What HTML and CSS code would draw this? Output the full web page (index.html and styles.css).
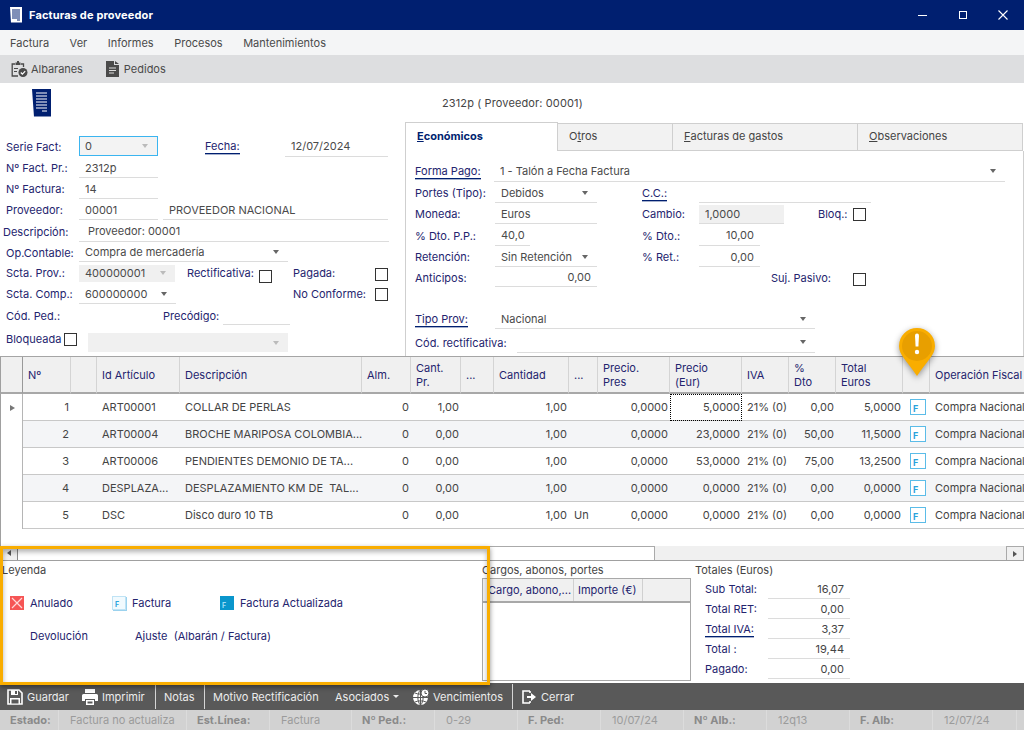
FILE: index.html
```html
<!DOCTYPE html>
<html lang="es">
<head>
<meta charset="utf-8">
<title>Facturas de proveedor</title>
<link rel="stylesheet" href="styles.css">
</head>
<body>
<div class="app">
  <header class="titlebar">
    <svg class="title-icon" viewBox="0 0 12 16" width="12" height="16"><path fill="#fff" d="M0 0h12v15l-1 1-1-1-1 1-1-1-1 1-1-1-1 1-1-1-1 1-1-1-1 1z"/><path stroke="#001f70" d="M2 3h8M2 5h8M2 7h8M2 9h8M2 11h8M7 13h3"/></svg>
    <span class="title-text">Facturas de proveedor</span>
    <div class="winctrls">
      <svg viewBox="0 0 10 10" width="10" height="10"><path stroke="#fff" d="M0 5.5h9"/></svg>
      <svg viewBox="0 0 10 10" width="10" height="10"><rect x="1.5" y="1.5" width="7" height="7" fill="none" stroke="#fff"/></svg>
      <svg viewBox="0 0 10 10" width="10" height="10"><path stroke="#fff" stroke-width="1.1" d="M.5.5l9 9M9.5.5l-9 9"/></svg>
    </div>
  </header>
  <nav class="menubar">
    <span>Factura</span><span>Ver</span><span>Informes</span><span>Procesos</span><span>Mantenimientos</span>
  </nav>
  <div class="toolbar">
    <span class="tool tool-alb">
      <svg viewBox="0 0 17 16" width="17" height="16"><path fill="none" stroke="#4a4a4a" stroke-width="1.3" d="M4 3H1.2v12H7M10 3h2.5v3"/><path fill="#4a4a4a" d="M4.5 1.5h1.5V0h2v1.500h1.500V4h-5zM3 7h4v1H3zM3 10h3v1H3z"/><circle cx="12" cy="11.500" r="4.500" fill="#4a4a4a"/><path fill="none" stroke="#fff" stroke-width="1.200" d="M9.800 11.500l1.600 1.600 2.800-3"/></svg>
      Albaranes
    </span>
    <span class="tool">
      <svg viewBox="0 0 13 16" width="13" height="16"><path fill="#4a4a4a" d="M0 0h8v4h5v12H0z"/><path fill="#4a4a4a" d="M9 0l4 3H9z"/><path stroke="#ddd" d="M3 7h7M3 9.500h7M3 12h5"/></svg>
      Pedidos
    </span>
  </div>

  <div class="doc-head">
    <svg class="doc-icon" viewBox="0 0 19 28" width="19" height="28"><path fill="#001f70" d="M0 0h19v27l-1 1-1-1-1 1-1-1-1 1-1-1-1 1-1-1-1 1-1-1-1 1-1-1-1 1-1-1-1 1-1-1-1 1z"/><path stroke="#fff" d="M4 4h11M4 7h11M4 10h11M4 13h11M4 16h11M4 19h11M10 22h5"/></svg>
    <span class="doc-title">2312p ( Proveedor: 00001)</span>
  </div>

  <section class="upper">
    <div class="left-form">
      <div class="frow frow-top">
        <label class="lbl w73">Serie Fact:</label>
        <span class="val sel focus w79">0<i class="arrow light"></i></span>
        <label class="lbl w80 ml47"><span class="link">Fecha:</span></label>
        <span class="val line w103">12/07/2024</span>
      </div>
      <div class="frow">
        <label class="lbl w73">Nº Fact. Pr.:</label>
        <span class="val line w79">2312p</span>
      </div>
      <div class="frow">
        <label class="lbl w73">Nº Factura:</label>
        <span class="val line w79">14</span>
      </div>
      <div class="frow">
        <label class="lbl w73">Proveedor:</label>
        <span class="val line w79">00001</span>
        <span class="val line w225 ml5">PROVEEDOR NACIONAL</span>
      </div>
      <div class="frow">
        <label class="lbl w76 nudge-left">Descripción:</label>
        <span class="val line w310 pad9">Proveedor: 00001</span>
      </div>
      <div class="frow">
        <label class="lbl w73">Op.Contable:</label>
        <span class="val sel line w209">Compra de mercadería<i class="arrow"></i></span>
      </div>
      <div class="frow">
        <label class="lbl w73">Scta. Prov.:</label>
        <span class="val sel off w96">400000001<i class="arrow light"></i></span>
        <label class="lbl w72 ml12">Rectificativa:</label>
        <i class="check chk-low"></i>
        <label class="lbl w82 ml21">Pagada:</label>
        <i class="check chk-pag"></i>
      </div>
      <div class="frow">
        <label class="lbl w73">Scta. Comp.:</label>
        <span class="val sel line w97">600000000<i class="arrow"></i></span>
        <label class="lbl w82 ml117">No Conforme:</label>
        <i class="check"></i>
      </div>
      <div class="frow frow-ped">
        <label class="lbl w157">Cód. Ped.:</label>
        <label class="lbl w60">Precódigo:</label>
        <span class="val line w67"></span>
      </div>
      <div class="frow frow-end">
        <label class="lbl w58 lbl-block">Bloqueada</label>
        <i class="check chk-block"></i>
        <span class="val sel off w200 ml11"><i class="arrow light"></i></span>
      </div>
    </div>

    <div class="tabs">
      <div class="tabbar">
        <span class="tab active"><u>E</u>conómicos</span>
        <span class="tab t115">O<u>t</u>ros</span>
        <span class="tab t185"><u>F</u>acturas de gastos</span>
        <span class="tab t165"><u>O</u>bservaciones</span>
      </div>
      <div class="tabpanel">
        <div class="frow">
          <label class="lbl w80"><span class="link">Forma Pago:</span></label>
          <span class="val sel line w511 nudge1">1 - Talón a Fecha Factura<i class="arrow"></i></span>
        </div>
        <div class="frow">
          <label class="lbl w80">Portes (Tipo):</label>
          <span class="val sel line w102">Debidos<i class="arrow"></i></span>
          <label class="lbl w57 ml45"><span class="link">C.C.:</span></label>
          <span class="val line w172"></span>
        </div>
        <div class="frow">
          <label class="lbl w80">Moneda:</label>
          <span class="val line w102">Euros</span>
          <label class="lbl w57 ml45">Cambio:</label>
          <span class="val line off w85">1,0000</span>
          <label class="lbl w35 ml34">Bloq.:</label>
          <i class="check"></i>
        </div>
        <div class="frow">
          <label class="lbl w80">% Dto. P.P.:</label>
          <span class="val line w35">40,0</span>
          <label class="lbl w57 ml112">% Dto.:</label>
          <span class="val line w61 right">10,00</span>
        </div>
        <div class="frow">
          <label class="lbl w80">Retención:</label>
          <span class="val sel line w102">Sin Retención<i class="arrow"></i></span>
          <label class="lbl w57 ml45">% Ret.:</label>
          <span class="val line w61 right">0,00</span>
        </div>
        <div class="frow">
          <label class="lbl w80">Anticipos:</label>
          <span class="val line w102 right">0,00</span>
          <label class="lbl w82 ml174">Suj. Pasivo:</label>
          <i class="check chk-suj"></i>
        </div>
        <div class="frow"></div>
        <div class="frow">
          <label class="lbl w80"><span class="link">Tipo Prov:</span></label>
          <span class="val sel line w320">Nacional<i class="arrow"></i></span>
        </div>
        <div class="frow frow-rect">
          <label class="lbl w102">Cód. rectificativa:</label>
          <span class="val sel line w298"><i class="arrow"></i></span>
        </div>
      </div>
    </div>
  </section>

  <section class="grid">
    <table class="lines">
      <colgroup>
        <col class="c23"><col class="c48"><col class="c26"><col class="c83"><col class="c182"><col class="c49"><col class="c50"><col class="c33"><col class="c75"><col class="c29"><col class="c72"><col class="c72"><col class="c47"><col class="c47"><col class="c67"><col class="c27"><col class="c110">
      </colgroup>
      <thead>
        <tr>
          <th class="rowhead"></th><th>Nº</th><th></th><th>Id Artículo</th><th>Descripción</th><th>Alm.</th><th>Cant.<br>Pr.</th><th>...</th><th>Cantidad</th><th>...</th><th>Precio.<br>Pres</th><th>Precio<br>(Eur)</th><th>IVA</th><th>%<br>Dto</th><th>Total<br>Euros</th><th></th><th>Operación Fiscal</th>
        </tr>
      </thead>
      <tbody>
        <tr>
          <td class="rowhead"><i class="row-mark"></i></td><td class="num first">1</td><td></td><td>ART00001</td><td>COLLAR DE PERLAS</td><td class="num">0</td><td class="num">1,00</td><td></td><td class="num">1,00</td><td></td><td class="num">0,0000</td><td class="num current">5,0000</td><td>21% (0)</td><td class="num">0,00</td><td class="num">5,0000</td><td class="iconcell"><span class="fdoc">F</span></td><td>Compra Nacional</td>
        </tr>
        <tr>
          <td class="rowhead"></td><td class="num first">2</td><td></td><td>ART00004</td><td>BROCHE MARIPOSA COLOMBIA...</td><td class="num">0</td><td class="num">0,00</td><td></td><td class="num">1,00</td><td></td><td class="num">0,0000</td><td class="num">23,0000</td><td>21% (0)</td><td class="num">50,00</td><td class="num">11,5000</td><td class="iconcell"><span class="fdoc">F</span></td><td>Compra Nacional</td>
        </tr>
        <tr>
          <td class="rowhead"></td><td class="num first">3</td><td></td><td>ART00006</td><td>PENDIENTES DEMONIO DE TA...</td><td class="num">0</td><td class="num">0,00</td><td></td><td class="num">1,00</td><td></td><td class="num">0,0000</td><td class="num">53,0000</td><td>21% (0)</td><td class="num">75,00</td><td class="num">13,2500</td><td class="iconcell"><span class="fdoc">F</span></td><td>Compra Nacional</td>
        </tr>
        <tr>
          <td class="rowhead"></td><td class="num first">4</td><td></td><td>DESPLAZA...</td><td>DESPLAZAMIENTO KM DE&nbsp; TAL...</td><td class="num">0</td><td class="num">0,00</td><td></td><td class="num">1,00</td><td></td><td class="num">0,0000</td><td class="num">0,0000</td><td>21% (0)</td><td class="num">0,00</td><td class="num">0,0000</td><td class="iconcell"><span class="fdoc">F</span></td><td>Compra Nacional</td>
        </tr>
        <tr>
          <td class="rowhead"></td><td class="num first">5</td><td></td><td>DSC</td><td>Disco duro 10 TB</td><td class="num">0</td><td class="num">0,00</td><td></td><td class="num">1,00</td><td>Un</td><td class="num">0,0000</td><td class="num">0,0000</td><td>21% (0)</td><td class="num">0,00</td><td class="num">0,0000</td><td class="iconcell"><span class="fdoc">F</span></td><td>Compra Nacional</td>
        </tr>
      </tbody>
    </table>
  </section>
  <div class="hscroll">
    <span class="sbtn"><i class="tri-left"></i></span>
    <span class="thumb"></span>
    <span class="sbtn sbtn-right"><i class="tri-right"></i></span>
  </div>

  <section class="lower">
    <div class="legend">
      <div class="caption">Leyenda</div>
      <div class="legend-row">
        <span class="item item-anulado">
          <svg viewBox="0 0 14 14" width="14" height="14"><rect width="14" height="14" fill="#f65555"/><path stroke="#ffd8d8" stroke-width="1.200" d="M2 2l10 10M12 2L2 12"/></svg>
          Anulado
        </span>
        <span class="item item-factura"><span class="fdoc soft">F</span>Factura</span>
        <span class="item"><span class="fdoc solid">F</span>Factura Actualizada</span>
      </div>
      <div class="legend-row row-two">
        <span class="plain w105">Devolución</span>
        <span class="plain">Ajuste&nbsp; (Albarán / Factura)</span>
      </div>
    </div>
    <div class="cargos">
      <div class="caption">Cargos, abonos, portes</div>
      <div class="cargos-box">
        <div class="cargos-head">
          <span class="ch1">Cargo, abono,...</span><span class="ch2">Importe (€)</span>
        </div>
      </div>
    </div>
    <div class="totals">
      <div class="caption caption-totals">Totales (Euros)</div>
      <div class="total-row"><span class="total-lbl">Sub Total:</span><span class="total-val">16,07</span></div>
      <div class="total-row"><span class="total-lbl">Total RET:</span><span class="total-val">0,00</span></div>
      <div class="total-row"><span class="total-lbl"><span class="link">Total IVA:</span></span><span class="total-val">3,37</span></div>
      <div class="total-row"><span class="total-lbl">Total :</span><span class="total-val">19,44</span></div>
      <div class="total-row"><span class="total-lbl">Pagado:</span><span class="total-val">0,00</span></div>
    </div>
  </section>

  <footer class="actionbar">
    <span class="act a-guardar">
      <svg viewBox="0 0 16 16" width="16" height="16"><path fill="none" stroke="#fff" stroke-width="1.600" d="M1 1h11l3 3v11H1z"/><path fill="#fff" d="M4 1h7v5H4zM3 9h10v6H3z"/><path fill="#595959" d="M8 2h2v3H8zM4.500 10.500h7v4h-7z"/></svg>
      Guardar
    </span>
    <span class="act a-imprimir sep-after">
      <svg viewBox="0 0 16 16" width="16" height="16"><path fill="#fff" d="M3 0h10v4H3zM1.500 5h13A1.500 1.500 0 0 1 16 6.500V12h-3v-2H3v2H0V6.500A1.500 1.500 0 0 1 1.500 5zM4 11h8v5H4z"/><path fill="#595959" d="M5.500 12.500h5v2h-5z"/></svg>
      Imprimir
    </span>
    <span class="act a-notas sep-after">Notas</span>
    <span class="act a-motivo">Motivo Rectificación</span>
    <span class="act a-asoc">Asociados<i class="caret"></i></span>
    <span class="act a-venc sep-after">
      <svg viewBox="0 0 16 16" width="16" height="16"><circle cx="7.500" cy="8.500" r="7.500" fill="#fff"/><path stroke="#595959" fill="none" d="M0 8.500h15M7.500 1v15M2 4c3 1.500 8 1.500 11 0M2 13c3-1.500 8-1.500 11 0M7.500 1C4 4 4 13 7.500 16M7.500 1c3.500 3 3.500 12 0 15"/><circle cx="12" cy="4" r="4" fill="#fff" stroke="#595959"/><path stroke="#595959" fill="none" d="M12 2v2.500h2"/></svg>
      Vencimientos
    </span>
    <span class="act a-cerrar">
      <svg viewBox="0 0 14 14" width="14" height="14"><path fill="none" stroke="#fff" stroke-width="1.600" d="M8 1H1v12h7M8 1v2M8 11v2"/><path fill="#fff" d="M5 6h4V3l5 4-5 4V8H5z"/></svg>
      Cerrar
    </span>
  </footer>

  <div class="statusbar">
    <span class="st key s59">Estado:</span>
    <span class="st s128">Factura no actualiza</span>
    <span class="st key s83">Est.Línea:</span>
    <span class="st s82">Factura</span>
    <span class="st key s83">Nº Ped.:</span>
    <span class="st s83">0-29</span>
    <span class="st key s83">F. Ped:</span>
    <span class="st s83">10/07/24</span>
    <span class="st key s83">Nº Alb.:</span>
    <span class="st s83">12q13</span>
    <span class="st key s83">F. Alb:</span>
    <span class="st s84">12/07/24</span>
  </div>

  <div class="highlight"></div>
  <svg class="pin" viewBox="0 0 36 48" width="36" height="48"><path fill="#f9ad00" d="M18 0a18 18 0 0 1 18 18c0 9-8 15-18 30C8 33 0 27 0 18A18 18 0 0 1 18 0z"/><circle cx="18" cy="18" r="15" fill="#e89f00"/><path fill="#fff" d="M16 7.500a2 2 0 0 1 4 0l-.6 11h-2.800z"/><circle cx="18" cy="24" r="2.200" fill="#fff"/></svg>
</div>
</body>
</html>
```
FILE: styles.css
```css
* { box-sizing: border-box; }
html, body { margin: 0; padding: 0; }
body { background: #fff; overflow: hidden; }
.app {
  position: relative;
  width: 1024px;
  height: 730px;
  overflow: hidden;
  display: flex;
  flex-direction: column;
  font: 11px/14px Inter, "Liberation Sans", sans-serif;
  color: #444;
}

/* title / menu / toolbar */
.titlebar { flex: 0 0 30px; background: #001f70; color: #fff; display: flex; align-items: center; padding-left: 10px; }
.title-icon { margin-right: 7px; }
.title-text { font-weight: 700; font-size: 11px; letter-spacing: .15px; }
.winctrls { margin-left: auto; display: flex; align-items: center; gap: 30px; padding-right: 16px; }
.menubar { flex: 0 0 25px; background: #f4f5f6; display: flex; align-items: center; gap: 20.5px; padding-left: 10px; color: #4a4a4a; }
.toolbar { flex: 0 0 28px; background: #dddee0; display: flex; align-items: center; padding-left: 11px; color: #4a4a4a; }
.tool { display: flex; align-items: center; gap: 3px; }
.tool-alb { margin-right: 23px; letter-spacing: -.05px; }
.tool + .tool { gap: 5px; }

/* document head */
.doc-head { flex: 0 0 39px; display: flex; align-items: flex-start; padding: 6px 0 0 32px; }
.doc-title { margin: 7px 0 0 391px; letter-spacing: .12px; }
.upper { flex: 0 0 234px; display: flex; }
.left-form {
  width: 405px;
  padding: 14px 0 0 6px;
  display: grid;
  grid-template-rows: 21px 21px 21px 21px 22px 20px 21px 21px 21px 28px;
  align-content: start;
}

/* form atoms */
.frow { display: flex; align-items: center; min-width: 0; padding-top: 1px; }
.frow-top { padding-top: 0; }
.frow-ped { padding-top: 2px; }
.frow-rect { padding-top: 3px; }
.frow-end { align-items: flex-end; padding-top: 0; padding-bottom: 1px; }
.lbl { color: #24246e; white-space: nowrap; flex: none; }
.link { border-bottom: 1px solid #001f70; display: inline-block; line-height: 13px; box-shadow: 0 1px 0 rgba(0,31,112,.35); }
.val { flex: none; height: 100%; display: flex; align-items: center; padding: 0 6px; color: #4a4a4a; white-space: nowrap; }
.line { border-bottom: 1px solid #dcdcdc; }
.right { justify-content: flex-end; }
.pad9 { padding-left: 9px; }
.sel { justify-content: space-between; }
.focus { border: 1px solid #3bb5f0; background: #f3f3f3; height: 20px; align-self: flex-start; padding-left: 5px; }
.off { background: #f0f0f0; }
.sel.off { height: 17px; align-self: center; }
.frow-end .sel.off { height: 19px; align-self: flex-end; }
.line.off { height: 19px; align-self: flex-end; }
.arrow { width: 0; height: 0; border: 3.5px solid transparent; border-top: 4px solid #666; border-bottom: 0; margin: 0 3px 0 auto; flex: none; }
.arrow.light { border-top-color: #bbb; }
.check { width: 13px; height: 13px; border: 1px solid #333; background: #fff; flex: none; }
.chk-low { align-self: flex-end; }
.chk-pag { margin-top: 2px; }
.chk-suj { align-self: flex-end; margin-bottom: 1px; }
.chk-block { margin-bottom: 6px; }
.lbl-block { margin-bottom: 6px; }
.nudge-left { margin-left: -3px; }
.nudge1 { margin-left: -1px; }
.w35 { width: 35px; } .w57 { width: 57px; } .w58 { width: 58px; } .w60 { width: 60px; } .w61 { width: 61px; } .w67 { width: 67px; }
.w72 { width: 72px; } .w73 { width: 73px; } .w76 { width: 76px; } .w79 { width: 79px; } .w80 { width: 80px; } .w82 { width: 82px; } .w85 { width: 85px; }
.w96 { width: 96px; } .w97 { width: 97px; } .w102 { width: 102px; } .w103 { width: 103px; } .w105 { width: 105px; } .w157 { width: 157px; } .w172 { width: 172px; }
.w200 { width: 200px; } .w209 { width: 209px; } .w225 { width: 225px; } .w298 { width: 298px; } .w310 { width: 310px; } .w320 { width: 320px; } .w511 { width: 511px; }
.ml5 { margin-left: 5px; } .ml11 { margin-left: 11px; } .ml12 { margin-left: 12px; } .ml21 { margin-left: 21px; } .ml34 { margin-left: 34px; } .ml45 { margin-left: 45px; }
.ml47 { margin-left: 47px; } .ml112 { margin-left: 112px; } .ml117 { margin-left: 117px; } .ml174 { margin-left: 174px; }

/* tabs */
.tabs { flex: 1; display: flex; flex-direction: column; min-width: 0; }
.tabbar { flex: 0 0 29px; display: flex; align-items: flex-end; padding-right: 1px; }
.tab { height: 28px; background: #f2f2f2; border: 1px solid #cfcfcf; border-left: 0; display: flex; align-items: center; padding: 0 0 2px 11px; color: #444; }
.tab.active { width: 153px; height: 29px; background: #fff; border-left: 1px solid #cfcfcf; border-bottom: 0; font-weight: 700; color: #001f70; }
.t115 { width: 115px; } .t185 { width: 185px; } .t165 { width: 165px; }
.tabpanel {
  flex: 1;
  border: 1px solid #cfcfcf;
  border-top: 0;
  border-bottom: 0;
  margin-right: 0;
  padding: 9px 0 0 9px;
  display: grid;
  grid-template-rows: 22px 21px 21px 22px 21px 20px 21px 21px 24px;
  align-content: start;
}

/* grid */
.grid { flex: 0 0 190px; border-top: 1px solid #a5a5a5; overflow: hidden; box-shadow: inset 1px 0 0 #a0a0a0; }
.lines { table-layout: fixed; width: 1040px; border-collapse: separate; border-spacing: 0; }
.c23 { width: 23px; } .c26 { width: 26px; } .c27 { width: 27px; } .c29 { width: 29px; } .c33 { width: 33px; } .c47 { width: 47px; } .c48 { width: 48px; } .c49 { width: 49px; }
.c50 { width: 50px; } .c67 { width: 67px; } .c72 { width: 72px; } .c75 { width: 75px; } .c83 { width: 83px; } .c110 { width: 110px; } .c182 { width: 182px; }
.lines th {
  height: 37px;
  padding: 0 0 0 5px;
  background: #f0f0f0;
  font-weight: 400;
  text-align: left;
  color: #24246e;
  border-right: 1px solid #d4d4d4;
  border-bottom: 2px solid #a8a8a8;
}
.lines th.rowhead { background: #f0f0f0; border-right-color: #999; border-left: 1px solid #a0a0a0; }
.lines td {
  height: 27px;
  padding: 0 2px 0 5px;
  white-space: nowrap;
  overflow: hidden;
  color: #444;
  border-bottom: 1px solid #c8c8c8;
}
.lines tbody tr:nth-child(even) td { background: #f4f5f7; }
.lines td.rowhead { background: #fff !important; border-bottom: 0; border-left: 1px solid #a0a0a0; border-right: 1px solid #b5b5b5; padding: 0 0 0 9px; }
.lines td.num { text-align: right; }
.lines td.current { outline: 1px dotted #000; outline-offset: -1px; }
.lines td.iconcell { padding-left: 7px; }
.row-mark { display: block; width: 0; height: 0; border: 3px solid transparent; border-left: 5px solid #777; border-right: 0; }
.fdoc {
  display: inline-flex; align-items: flex-end;
  width: 16px; height: 16px;
  border: 1px solid #5bbce8;
  background: #fff;
  color: #2ba3dc;
  font-size: 9px; line-height: 11px; font-weight: 700;
  padding-left: 2px;
  vertical-align: middle;
  flex: none;
}
.fdoc.soft { width: 14px; height: 14px; font-size: 7px; line-height: 9px; border-color: #bfe3f5; background: #f1fafe; box-shadow: 1px 1px 0 #9bd2ee; }
.fdoc.solid { width: 14px; height: 14px; font-size: 7px; line-height: 9px; border: 0; background: #0a96cc; color: #9fdcf5; }

/* scroll */
.hscroll { flex: 0 0 15px; display: flex; background: #f0f0f0; border-bottom: 1px solid #a0a0a0; }
.sbtn { flex: 0 0 18px; display: flex; align-items: center; justify-content: center; border-right: 1px solid #888; }
.sbtn-right { border: 1px solid #aaa; border-bottom: 0; margin-left: auto; }
.thumb { flex: 0 0 637px; background: #fff; border: 1px solid #aaa; border-left: 0; border-bottom: 0; }
.tri-left { width: 0; height: 0; border: 3.5px solid transparent; border-right: 4px solid #555; border-left: 0; }
.tri-right { width: 0; height: 0; border: 3.5px solid transparent; border-left: 4px solid #555; border-right: 0; }

/* lower */
.lower { flex: 0 0 122px; display: flex; }
.caption { line-height: 14px; padding-top: 2px; color: #444; height: 17px; }
.caption-totals { height: 18px; }
.legend { flex: 0 0 482px; padding-left: 2px; }
.legend-row { display: flex; align-items: center; height: 14px; margin-top: 18px; padding-left: 8px; color: #24246e; }
.row-two { margin-top: 19px; padding-left: 28px; }
.item { display: flex; align-items: center; gap: 6px; }
.item-anulado { width: 102px; }
.item-factura { width: 108px; }
.plain { white-space: nowrap; }
.cargos { flex: 0 0 213px; padding-top: 0; }
.cargos-box { width: 209px; height: 103px; border: 1px solid #a8a8a8; }
.cargos-head { display: flex; height: 24px; background: #f0f0f0; border-bottom: 2px solid #a8a8a8; color: #24246e; align-items: center; }
.ch1 { width: 91px; height: 100%; display: flex; align-items: center; padding-left: 5px; border-right: 1px solid #d0d0d0; white-space: nowrap; }
.ch2 { width: 69px; height: 100%; display: flex; align-items: center; padding-left: 4px; border-right: 1px solid #d0d0d0; white-space: nowrap; }
.totals { flex: 0 0 155px; }
.total-row { display: flex; height: 20px; align-items: center; padding-left: 10px; color: #24246e; margin-top: 0; }
.total-lbl { width: 63px; flex: none; white-space: nowrap; }
.total-val { width: 82px; height: 100%; display: flex; align-items: center; justify-content: flex-end; padding-right: 6px; border-bottom: 1px solid #dcdcdc; color: #444; }

/* action bar */
.actionbar { flex: 0 0 27px; background: #595959; color: #ececec; display: flex; align-items: center; }
.act { display: flex; align-items: center; gap: 4px; height: 25px; white-space: nowrap; flex: none; }
.sep-after { border-right: 1px solid #d5d5d5; }
.a-guardar { padding-left: 7px; width: 82px; }
.a-imprimir { width: 74px; }
.a-notas { width: 49px; padding-left: 8px; }
.a-motivo { width: 130px; padding-left: 8px; }
.a-asoc { width: 78px; }
.a-venc { width: 100px; }
.a-cerrar { padding-left: 9px; gap: 5px; }
.caret { width: 0; height: 0; border: 3px solid transparent; border-top: 3px solid #ececec; border-bottom: 0; }

/* status */
.statusbar { flex: 0 0 20px; display: flex; background: #d2d2d2; }
.st { height: 100%; display: flex; align-items: center; padding-left: 11px; color: #9b9b9b; border-right: 1px solid #dcdcdc; white-space: nowrap; flex: none; }
.key { font-weight: 700; color: #8a8a8a; padding-left: 10px; }
.s59 { width: 59px; } .s82 { width: 82px; } .s83 { width: 83px; } .s84 { width: 84px; } .s128 { width: 128px; }

/* overlays */
.highlight {
  position: absolute; left: 0; top: 546px;
  width: 490px; height: 139px;
  border: 3px solid #f9ad00;
  box-shadow: 0 2px 5px rgba(0,0,0,.45), inset 0 3px 5px rgba(0,0,0,.3);
  pointer-events: none;
}
.pin { position: absolute; left: 899px; top: 328px; filter: drop-shadow(0 2px 3px rgba(0,0,0,.4)); }
```
